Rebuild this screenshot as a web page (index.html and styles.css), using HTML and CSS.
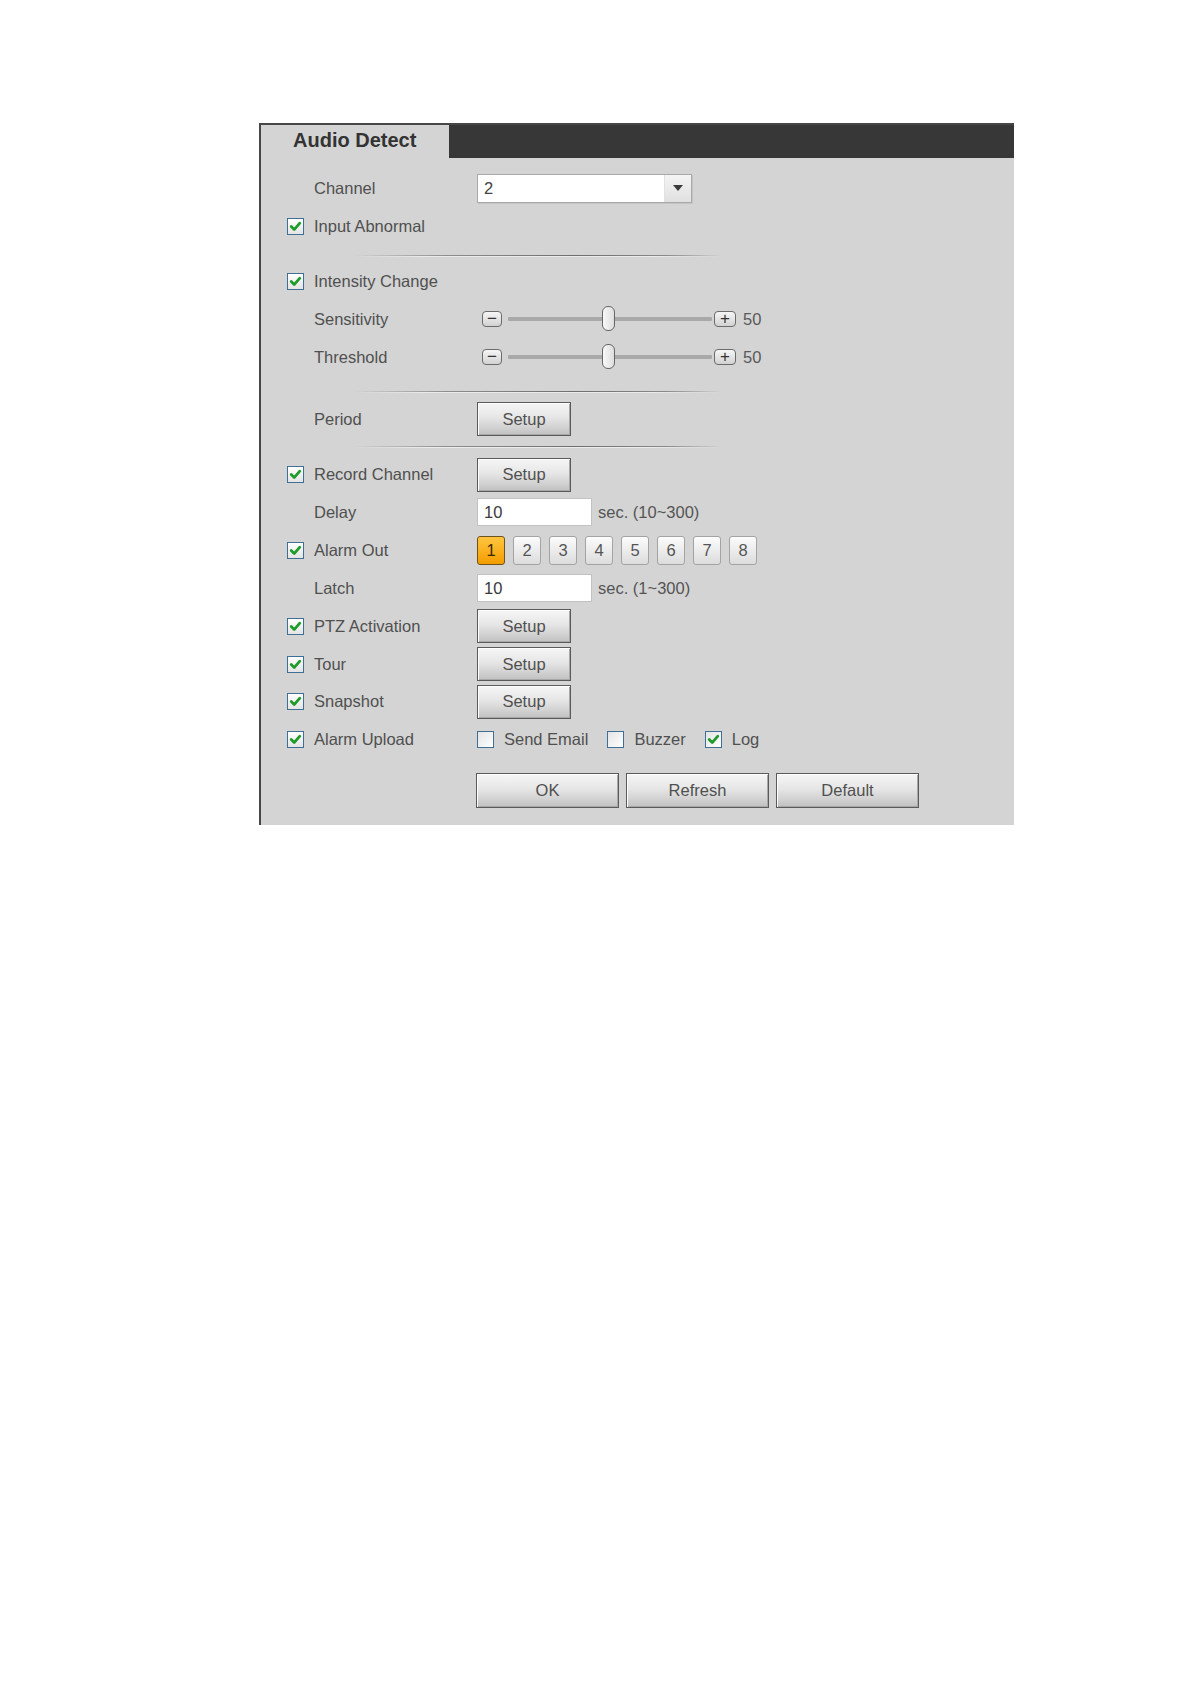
FILE: index.html
```html
<!DOCTYPE html>
<html>
<head>
<meta charset="utf-8">
<title>Audio Detect</title>
<link rel="stylesheet" href="styles.css">
</head>
<body>
<div class="page">
  <div class="panel">
    <div class="tabbar">
      <div class="tab">Audio Detect</div>
      <div class="tabfill"></div>
    </div>
    <div class="form">
      <div class="row h38">
        <span class="slot"></span><span class="label">Channel</span>
        <div class="select"><span class="select-val">2</span><span class="select-arrow"><span class="tri"></span></span></div>
      </div>
      <div class="row h39">
        <span class="slot"><span class="cb on"><svg viewBox="0 0 15 15"><path d="M3.2 7.6 L6.2 10.6 L11.8 4.2"/></svg></span></span><span class="label">Input Abnormal</span>
      </div>
      <div class="sep s1"></div>
      <div class="row h38">
        <span class="slot"><span class="cb on"><svg viewBox="0 0 15 15"><path d="M3.2 7.6 L6.2 10.6 L11.8 4.2"/></svg></span></span><span class="label">Intensity Change</span>
      </div>
      <div class="row h38">
        <span class="slot"></span><span class="label">Sensitivity</span>
        <div class="slider">
          <span class="sbtn minus">&minus;</span>
          <span class="track"><span class="thumb"></span></span>
          <span class="sbtn plus">+</span>
          <span class="sval">50</span>
        </div>
      </div>
      <div class="row h38">
        <span class="slot"></span><span class="label">Threshold</span>
        <div class="slider">
          <span class="sbtn minus">&minus;</span>
          <span class="track"><span class="thumb"></span></span>
          <span class="sbtn plus">+</span>
          <span class="sval">50</span>
        </div>
      </div>
      <div class="sep s2"></div>
      <div class="row h38">
        <span class="slot"></span><span class="label">Period</span>
        <button class="btn setup">Setup</button>
      </div>
      <div class="sep s3"></div>
      <div class="row h37">
        <span class="slot"><span class="cb on"><svg viewBox="0 0 15 15"><path d="M3.2 7.6 L6.2 10.6 L11.8 4.2"/></svg></span></span><span class="label">Record Channel</span>
        <button class="btn setup">Setup</button>
      </div>
      <div class="row h38">
        <span class="slot"></span><span class="label">Delay</span>
        <span class="input">10</span><span class="suffix">sec. (10~300)</span>
      </div>
      <div class="row h38">
        <span class="slot"><span class="cb on"><svg viewBox="0 0 15 15"><path d="M3.2 7.6 L6.2 10.6 L11.8 4.2"/></svg></span></span><span class="label">Alarm Out</span>
        <div class="nums">
          <span class="num active">1</span><span class="num">2</span><span class="num">3</span><span class="num">4</span><span class="num">5</span><span class="num">6</span><span class="num">7</span><span class="num">8</span>
        </div>
      </div>
      <div class="row h38">
        <span class="slot"></span><span class="label">Latch</span>
        <span class="input">10</span><span class="suffix">sec. (1~300)</span>
      </div>
      <div class="row h38">
        <span class="slot"><span class="cb on"><svg viewBox="0 0 15 15"><path d="M3.2 7.6 L6.2 10.6 L11.8 4.2"/></svg></span></span><span class="label">PTZ Activation</span>
        <button class="btn setup">Setup</button>
      </div>
      <div class="row h38">
        <span class="slot"><span class="cb on"><svg viewBox="0 0 15 15"><path d="M3.2 7.6 L6.2 10.6 L11.8 4.2"/></svg></span></span><span class="label">Tour</span>
        <button class="btn setup">Setup</button>
      </div>
      <div class="row h37">
        <span class="slot"><span class="cb on"><svg viewBox="0 0 15 15"><path d="M3.2 7.6 L6.2 10.6 L11.8 4.2"/></svg></span></span><span class="label">Snapshot</span>
        <button class="btn setup">Setup</button>
      </div>
      <div class="row h38">
        <span class="slot"><span class="cb on"><svg viewBox="0 0 15 15"><path d="M3.2 7.6 L6.2 10.6 L11.8 4.2"/></svg></span></span><span class="label">Alarm Upload</span>
        <div class="opts">
          <span class="opt"><span class="cb"></span><span class="opt-text">Send Email</span></span>
          <span class="opt"><span class="cb"></span><span class="opt-text">Buzzer</span></span>
          <span class="opt"><span class="cb on"><svg viewBox="0 0 15 15"><path d="M3.2 7.6 L6.2 10.6 L11.8 4.2"/></svg></span><span class="opt-text">Log</span></span>
        </div>
      </div>
      <div class="actions">
        <button class="btn big">OK</button>
        <button class="btn big">Refresh</button>
        <button class="btn big">Default</button>
      </div>
    </div>
  </div>
</div>
</body>
</html>
```

FILE: styles.css
```css
html, body {
  margin: 0;
  padding: 0;
  background: #ffffff;
}

body {
  font-family: "Liberation Sans", Arial, sans-serif;
  font-size: 16.5px;
  color: #505050;
}

.page {
  padding: 123px 0 40px 259px;
}

.panel {
  width: 753px;
  background: #d4d4d4;
  border-top: 2px solid #474747;
  border-left: 2px solid #474747;
}

.tabbar {
  display: flex;
  height: 33px;
}

.tab {
  width: 156px;
  padding-left: 32px;
  padding-bottom: 2px;
  display: flex;
  align-items: center;
  font-size: 20px;
  font-weight: bold;
  color: #333333;
  background: #d4d4d4;
}

.tabfill {
  flex: 1;
  background: #373737;
}

.form {
  padding: 11px 0 17px 26px;
}

.row {
  display: flex;
  align-items: center;
}

.h37 { height: 37px; }
.h38 { height: 38px; }
.h39 { height: 39px; }

.slot {
  width: 27px;
  flex: none;
  display: flex;
  align-items: center;
}

.label {
  width: 163px;
  flex: none;
  white-space: nowrap;
}

/* checkbox */
.cb {
  width: 15px;
  height: 15px;
  border: 1px solid #3f6f94;
  background: linear-gradient(#ffffff, #e4e4e4);
  display: inline-flex;
  align-items: center;
  justify-content: center;
  flex: none;
}

.cb svg {
  width: 15px;
  height: 15px;
}

.cb svg path {
  fill: none;
  stroke: #1f9b2a;
  stroke-width: 2.8;
  stroke-linecap: round;
  stroke-linejoin: round;
}

/* select */
.select {
  width: 213px;
  height: 27px;
  border: 1px solid #a9a9a9;
  background: #ffffff;
  display: flex;
  align-items: center;
  box-shadow: 1px 1px 0 #c4c4c4;
}

.select-val {
  flex: 1;
  padding-left: 6px;
  color: #444444;
}

.select-arrow {
  width: 26px;
  height: 27px;
  border-left: 1px solid #e2e2e2;
  background: linear-gradient(#f4f4f4, #e0e0e0);
  display: flex;
  align-items: center;
  justify-content: center;
}

.tri {
  width: 0;
  height: 0;
  border-left: 5px solid transparent;
  border-right: 5px solid transparent;
  border-top: 6px solid #3a3a3a;
}

/* separators */
.sep {
  width: 368px;
  height: 2px;
  margin-left: 67px;
  background:
    linear-gradient(90deg, rgba(200,200,200,0), #ececec 20%, #ececec 80%, rgba(200,200,200,0)) 0 1px / 100% 1px no-repeat,
    linear-gradient(90deg, rgba(150,150,150,0), #8e8e8e 25%, #6e6e6e 60%, #8a8a8a 85%, rgba(150,150,150,0)) 0 0 / 100% 1px no-repeat;
}

.s1 { margin-top: 9px; margin-bottom: 5px; }
.s2 { margin-top: 15px; margin-bottom: 7px; }
.s3 { margin-top: 8px; margin-bottom: 8px; }

/* slider */
.slider {
  display: flex;
  align-items: center;
  margin-left: 5px;
}

.sbtn {
  height: 14px;
  border: 1px solid #6b6b6b;
  border-radius: 4px;
  background: linear-gradient(#f6f6f6, #d2d2d2);
  display: flex;
  align-items: center;
  justify-content: center;
  font-size: 17px;
  line-height: 14px;
  color: #333333;
}

.minus { width: 18px; }
.plus { width: 20px; margin-left: 2px; }

.track {
  position: relative;
  width: 204px;
  height: 4px;
  margin-left: 6px;
  background: #a9a9a9;
  border-radius: 1px;
}

.thumb {
  position: absolute;
  left: 94px;
  top: -11px;
  width: 11px;
  height: 23px;
  border: 1px solid #666666;
  border-radius: 6px;
  background: linear-gradient(90deg, #f8f8f8, #dedede);
}

.sval {
  margin-left: 7px;
  color: #5a5a5a;
}

/* buttons */
.btn {
  font-family: "Liberation Sans", Arial, sans-serif;
  font-size: 16.5px;
  color: #505050;
  border: 1px solid #5a5a5a;
  border-radius: 0;
  background: linear-gradient(#f6f6f6 0%, #e6e6e6 45%, #cfcfcf 80%, #c0c0c0 100%);
  box-shadow: inset 1px 1px 0 #ffffff, inset -1px -1px 0 #a8a8a8;
  padding: 0;
  margin: 0;
}

.setup {
  width: 94px;
  height: 34px;
}

/* inputs */
.input {
  width: 107px;
  height: 26px;
  border: 1px solid #c2c2c2;
  background: #ffffff;
  display: flex;
  align-items: center;
  padding-left: 6px;
  color: #3a3a3a;
  box-sizing: content-box;
}

.suffix {
  margin-left: 6px;
  color: #555555;
}

/* alarm numbers */
.nums {
  display: flex;
  gap: 8px;
}

.num {
  width: 26px;
  height: 27px;
  border: 1px solid #a3a3a3;
  border-radius: 3px;
  background: linear-gradient(#fcfcfc, #dcdcdc);
  display: flex;
  align-items: center;
  justify-content: center;
  color: #555555;
}

.num.active {
  border-color: #6f521c;
  background: linear-gradient(#ffc640, #f49c00);
  color: #3a2a00;
}

/* alarm upload options */
.opts {
  display: flex;
  align-items: center;
}

.opt {
  display: flex;
  align-items: center;
  margin-right: 19px;
}

.opt .cb {
  background: linear-gradient(135deg, #e4e4e4, #ffffff);
}

.opt-text {
  margin-left: 10px;
}

/* bottom actions */
.actions {
  display: flex;
  gap: 7px;
  margin-top: 15px;
  padding-left: 189px;
}

.big {
  width: 143px;
  height: 35px;
}
```
